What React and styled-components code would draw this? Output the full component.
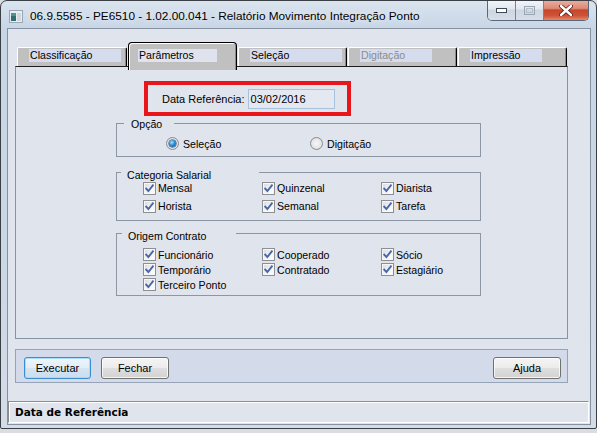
import React from 'react';
import styled, { createGlobalStyle } from 'styled-components';

const GlobalStyle = createGlobalStyle`
  html, body { margin: 0; padding: 0; background: #d9dde2; }
  body { width: 597px; height: 433px; overflow: hidden; font-family: "Liberation Sans", Arial, sans-serif; }
`;

const Window = styled.div`
  box-sizing: border-box;
  width: 597px;
  height: 429px;
  display: flex;
  flex-direction: column;
  background: linear-gradient(180deg, #dae4ef 0px, #c7d5e5 28px, #ccd7e4 60%, #d3dce7 100%);
  border: 1px solid #3a3f46;
  border-radius: 7px 7px 2px 2px;
  overflow: hidden;
`;

const TitleBar = styled.div`
  display: flex;
  align-items: flex-start;
  height: 27px;
  padding-left: 8px;
  flex-shrink: 0;
`;

const TitleIcon = styled.svg`
  margin-top: 9px;
  flex-shrink: 0;
`;

const TitleText = styled.div`
  margin-top: 8px;
  margin-left: 7px;
  font-family: "Liberation Sans", Arial, sans-serif;
  font-size: 11.8px;
  line-height: 15px;
  color: #000;
  white-space: nowrap;
  text-shadow: 0 0 6px rgba(255, 255, 255, 0.9);
`;

const Caption = styled.div`
  display: flex;
  margin: -1px 7px 0 auto;
  height: 20px;
  border: 1px solid #5b6676;
  border-top: none;
  border-radius: 0 0 5px 5px;
  overflow: hidden;
  flex-shrink: 0;
`;

const CapBtn = styled.div`
  width: ${(p) => p.$w}px;
  display: flex;
  align-items: center;
  justify-content: center;
  background: ${(p) =>
    p.$close
      ? 'linear-gradient(180deg, #eab1a3 0%, #de8a75 42%, #c9452d 50%, #cf5337 78%, #e3886a 100%)'
      : 'linear-gradient(180deg, #f3f6f9 0%, #e2e8ef 45%, #cdd6e1 50%, #d7dfe9 100%)'};
  & + & {
    border-left: 1px solid #788496;
  }
`;

const Client = styled.div`
  flex: 1;
  display: flex;
  flex-direction: column;
  margin: 0 5px 3px 6px;
  border: 1px solid #8591a1;
  background: #e0e4ec;
`;

const Body = styled.div`
  padding: 13px 0 0 7px;
  width: 553px;
`;

const TabsRow = styled.div`
  position: relative;
  z-index: 1;
  display: flex;
  align-items: flex-end;
  gap: 1px;
  height: 24px;
  padding-left: 2px;
`;

const Tab = styled.div`
  box-sizing: border-box;
  width: ${(p) => p.$w}px;
  height: ${(p) => (p.$active ? 28 : 19)}px;
  margin-bottom: ${(p) => (p.$active ? -4 : 0)}px;
  background: #c0c0c0;
  border-top: 1px solid ${(p) => (p.$active ? '#000' : '#fff')};
  border-left: 1px solid ${(p) => (p.$active ? '#000' : '#fff')};
  border-right: 1px solid #000;
  border-radius: ${(p) => (p.$active ? '4px 4px 0 0' : '2px 2px 0 0')};
  box-shadow: ${(p) =>
    p.$active ? 'inset 1px 1px 0 #fff, inset -1px 0 0 #8a8a8a' : 'inset -1px 0 0 #8a8a8a'};
  padding: ${(p) => (p.$active ? '6px 0 0 9px' : '1px 0 0 11px')};
`;

const TabLabel = styled.div`
  width: ${(p) => p.$w}px;
  height: 13px;
  background: ${(p) => (p.$active ? '#dfe3ee' : '#d4dcee')};
  font-size: 10.6px;
  line-height: 13px;
  padding-left: 1px;
  color: ${(p) => (p.$disabled ? '#8c8c8c' : '#000')};
  white-space: nowrap;
`;

const Panel = styled.div`
  box-sizing: border-box;
  height: 273px;
  border: 1px solid #8693a4;
  border-top: 1px solid #1c1c1c;
  display: flex;
  flex-direction: column;
  align-items: flex-start;
  padding-top: 14px;
`;

const RedBox = styled.div`
  box-sizing: border-box;
  margin-left: 128px;
  width: 207px;
  height: 35px;
  border: 4px solid #e8151d;
  display: flex;
  align-items: center;
  padding-left: 14px;
  gap: 3px;
`;

const FieldLabel = styled.span`
  font-size: 11px;
  color: #000;
  white-space: nowrap;
`;

const DateInput = styled.div`
  box-sizing: border-box;
  width: 87px;
  height: 20px;
  border: 1px solid #a6c2dc;
  background: #e4e8f0;
  font-size: 11px;
  line-height: 18px;
  padding-left: 2px;
  color: #000;
`;

const Group = styled.fieldset`
  box-sizing: border-box;
  width: 365px;
  margin: ${(p) => p.$mt}px 0 0 100px;
  padding: 0;
  min-width: 0;
  border: 1px solid #8d96a3;
`;

const Legend = styled.legend`
  box-sizing: border-box;
  width: ${(p) => p.$w}px;
  margin-left: ${(p) => p.$ml}px;
  padding: ${(p) => p.$pt}px 0 0 ${(p) => p.$pl}px;
  font-size: 10.6px;
  line-height: 13px;
  color: #000;
  white-space: nowrap;
`;

const RadioRow = styled.div`
  display: flex;
  padding: 6px 0 6px 49px;
`;

const RadioItem = styled.label`
  display: flex;
  align-items: center;
  gap: 4px;
  width: ${(p) => p.$w || 'auto'};
  height: 13px;
  font-size: 10.6px;
  color: #000;
`;

const RadioCircle = styled.span`
  box-sizing: border-box;
  width: 13px;
  height: 13px;
  border-radius: 50%;
  border: 1px solid #8a8d91;
  background: radial-gradient(circle at 50% 50%, #f7f7f7 0%, #e6e7ea 55%, #c9ccd1 100%);
  display: flex;
  align-items: center;
  justify-content: center;
  flex-shrink: 0;
`;

const RadioDot = styled.span`
  width: 7px;
  height: 7px;
  border-radius: 50%;
  background: radial-gradient(circle at 40% 35%, #a7e3ff 0%, #2d8fd3 45%, #0e4f86 100%);
  box-shadow: 0 0 0 0.5px #123d66;
`;

const CheckGrid = styled.div`
  display: grid;
  grid-template-columns: 119px 119px 119px;
  grid-auto-rows: ${(p) => p.$rowH}px;
  row-gap: ${(p) => p.$gap}px;
  padding: ${(p) => p.$pt}px 0 ${(p) => p.$pb}px 26px;
`;

const CheckItem = styled.label`
  display: flex;
  align-items: center;
  gap: 2px;
  font-size: 10.6px;
  color: #000;
  white-space: nowrap;
`;

const CheckBox = styled.span`
  box-sizing: border-box;
  width: 13px;
  height: 13px;
  border: 1px solid #8e8f92;
  background: linear-gradient(135deg, #d6d9de 0%, #f4f5f7 60%, #ffffff 100%);
  box-shadow: inset 0 0 0 1px #f7f7f7;
  display: flex;
  align-items: center;
  justify-content: center;
  flex-shrink: 0;
`;

const ButtonBar = styled.div`
  box-sizing: border-box;
  margin-top: 10px;
  height: 34px;
  border: 1px solid #97a3b6;
  background: #d3dbeb;
  display: flex;
  align-items: flex-start;
  padding: 7px 6px 0 8px;
  gap: 10px;
`;

const Button = styled.button`
  box-sizing: border-box;
  width: ${(p) => p.$w}px;
  height: 22px;
  margin-left: ${(p) => (p.$right ? 'auto' : '0')};
  padding: 0;
  font-family: "Liberation Sans", Arial, sans-serif;
  font-size: 11px;
  color: #000;
  border: 1px solid ${(p) => (p.$default ? '#3d8ccc' : '#707070')};
  border-radius: 3px;
  background: ${(p) =>
    p.$default
      ? 'linear-gradient(180deg, #eef5fb 0%, #e3eef8 48%, #d5e5f3 52%, #cadcee 100%)'
      : 'linear-gradient(180deg, #f4f4f4 0%, #ececec 48%, #dedede 52%, #d2d2d2 100%)'};
  box-shadow: inset 0 0 0 1px ${(p) => (p.$default ? 'rgba(160,220,250,0.9)' : 'rgba(255,255,255,0.75)')};
`;

const StatusBar = styled.div`
  box-sizing: border-box;
  margin: 18px 1px 0 0;
  height: 22px;
  border-top: 1px solid #8c8c8c;
  border-left: 1px solid #8c8c8c;
  border-right: 1px solid #ffffff;
  border-bottom: 1px solid #ffffff;
  box-shadow: inset 1px 1px 0 #ffffff;
  display: flex;
  align-items: center;
  padding-left: 6px;
  font-family: "DejaVu Sans", Verdana, sans-serif;
  font-weight: bold;
  font-size: 10.5px;
  color: #000;
`;

const CheckMark = () => (
  <svg width="9" height="9" viewBox="0 0 9 9">
    <path d="M1.2 4.6 L3.4 7 L7.9 1.4" fill="none" stroke="#4a66a6" strokeWidth="1.9" strokeLinecap="square" />
  </svg>
);

const Check = ({ label }) => (
  <CheckItem>
    <CheckBox>
      <CheckMark />
    </CheckBox>
    {label}
  </CheckItem>
);

const tabs = [
  { label: 'Classificação', w: 110, box: 91 },
  { label: 'Parâmetros', w: 109, box: 78, active: true },
  { label: 'Seleção', w: 109, box: 91 },
  { label: 'Digitação', w: 109, box: 71, disabled: true },
  { label: 'Impressão', w: 109, box: 71 },
];

const categoria = ['Mensal', 'Quinzenal', 'Diarista', 'Horista', 'Semanal', 'Tarefa'];
const origem = ['Funcionário', 'Cooperado', 'Sócio', 'Temporário', 'Contratado', 'Estagiário', 'Terceiro Ponto'];

export default function App() {
  return (
    <>
      <GlobalStyle />
      <Window>
        <TitleBar>
          <TitleIcon width="14" height="13" viewBox="0 0 14 13">
            <rect x="0.5" y="0.5" width="13" height="12" fill="#e9edf1" stroke="#9aa6b2" />
            <rect x="2" y="3" width="5" height="8" fill="#2f6f72" />
            <rect x="2" y="3" width="5" height="3" fill="#4b9396" />
            <rect x="8" y="3" width="4" height="8" fill="#cfd8e0" />
          </TitleIcon>
          <TitleText>06.9.5585 - PE6510 - 1.02.00.041 - Relatório Movimento Integração Ponto</TitleText>
          <Caption>
            <CapBtn $w={27}>
              <svg width="11" height="5" viewBox="0 0 11 5">
                <rect x="0.5" y="0.5" width="10" height="4" fill="#fff" stroke="#3f4a57" />
              </svg>
            </CapBtn>
            <CapBtn $w={27}>
              <svg width="11" height="9" viewBox="0 0 11 9">
                <rect x="0.5" y="0.5" width="10" height="8" fill="none" stroke="#9aa5b3" />
                <rect x="2.5" y="2.5" width="6" height="4" fill="none" stroke="#b4bdc8" />
              </svg>
            </CapBtn>
            <CapBtn $w={44} $close>
              <svg width="14" height="11" viewBox="0 0 14 11">
                <path d="M2 1 L12 10 M12 1 L2 10" stroke="#4a1a14" strokeWidth="4" strokeLinecap="round" />
                <path d="M2 1 L12 10 M12 1 L2 10" stroke="#ffffff" strokeWidth="2.4" strokeLinecap="round" />
              </svg>
            </CapBtn>
          </Caption>
        </TitleBar>
        <Client>
          <Body>
            <TabsRow>
              {tabs.map((t) => (
                <Tab key={t.label} $w={t.w} $active={t.active}>
                  <TabLabel $w={t.box} $active={t.active} $disabled={t.disabled}>
                    {t.label}
                  </TabLabel>
                </Tab>
              ))}
            </TabsRow>
            <Panel>
              <RedBox>
                <FieldLabel>Data Referência:</FieldLabel>
                <DateInput>03/02/2016</DateInput>
              </RedBox>
              <Group $mt={-1}>
                <Legend $w={50} $ml={7} $pl={7} $pt={3}>Opção</Legend>
                <RadioRow>
                  <RadioItem $w="144px">
                    <RadioCircle>
                      <RadioDot />
                    </RadioCircle>
                    Seleção
                  </RadioItem>
                  <RadioItem>
                    <RadioCircle />
                    Digitação
                  </RadioItem>
                </RadioRow>
              </Group>
              <Group $mt={5}>
                <Legend $w={138} $ml={4} $pl={6} $pt={7}>Categoria Salarial</Legend>
                <CheckGrid $rowH={12} $gap={6} $pt={0} $pb={8}>
                  {categoria.map((c) => (
                    <Check key={c} label={c} />
                  ))}
                </CheckGrid>
              </Group>
              <Group $mt={2}>
                <Legend $w={114} $ml={5} $pl={6} $pt={7}>Origem Contrato</Legend>
                <CheckGrid $rowH={15} $gap={0} $pt={4} $pb={3}>
                  {origem.map((c) => (
                    <Check key={c} label={c} />
                  ))}
                </CheckGrid>
              </Group>
            </Panel>
            <ButtonBar>
              <Button $w={67} $default>Executar</Button>
              <Button $w={68}>Fechar</Button>
              <Button $w={68} $right>Ajuda</Button>
            </ButtonBar>
          </Body>
          <StatusBar>Data de Referência</StatusBar>
        </Client>
      </Window>
    </>
  );
}
